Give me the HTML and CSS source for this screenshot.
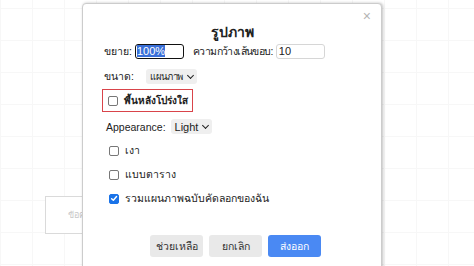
FILE: index.html
```html
<!DOCTYPE html>
<html lang="th">
<head>
    <meta charset="UTF-8">
    <title>รูปภาพ</title>
    <link rel="stylesheet" href="styles.css">
</head>
<body>

    <!-- Canvas behind the dialog -->
    <div class="canvas">
        <div class="shape">ข้อความ</div>
    </div>

    <!-- Export dialog -->
    <div class="dialog">
        <span class="close">&#215;</span>
        <div class="title">รูปภาพ</div>

        <div class="row row-first">
            <span>ขยาย:</span>
            <span class="field focused"><span class="sel">100%</span></span>
            <span class="gap-label">ความกว้างเส้นขอบ:</span>
            <span class="field">10</span>
        </div>

        <div class="row">
            <span>ขนาด:</span>
            <span class="select size-select">แผนภาพ <span class="caret"></span></span>
        </div>

        <div class="row highlight">
            <span class="check"></span>
            <span class="bold-label">พื้นหลังโปร่งใส</span>
        </div>

        <div class="row after-highlight">
            <span class="app-label">Appearance:</span>
            <span class="select">Light <span class="caret"></span></span>
        </div>

        <div class="row check-row">
            <span class="check"></span>
            <span>เงา</span>
        </div>

        <div class="row check-row">
            <span class="check"></span>
            <span>แบบตาราง</span>
        </div>

        <div class="row check-row">
            <span class="check checked">
                <svg width="9" height="9" viewBox="0 0 10 10"><path d="M2 5.2 L4.2 7.3 L8.2 2.6" fill="none" stroke="#fff" stroke-width="1.8" stroke-linecap="round" stroke-linejoin="round"/></svg>
            </span>
            <span>รวมแผนภาพฉบับคัดลอกของฉัน</span>
        </div>

        <div class="buttons">
            <button class="btn">ช่วยเหลือ</button>
            <button class="btn">ยกเลิก</button>
            <button class="btn primary">ส่งออก</button>
        </div>
    </div>

</body>
</html>
```

FILE: styles.css
```css
body {
    font-family: "Liberation Sans", "Noto Sans", sans-serif;
    font-size: 10.5px;
    color: #222;
    margin: 0;
    padding: 0;
    width: 474px;
    height: 266px;
    overflow: hidden;
    background-color: #fff;
}

.canvas {
    position: relative;
    width: 474px;
    height: 266px;
    background-image:
        linear-gradient(to right, #f7f7f7 1px, transparent 1px),
        linear-gradient(to bottom, #f7f7f7 1px, transparent 1px);
    background-size: 32px 32px;
    background-position: 0 8px;
}

.shape {
    position: absolute;
    left: 45px;
    top: 196px;
    width: 80px;
    height: 36px;
    border: 1px solid #dadada;
    color: #c8c8c8;
    font-size: 9px;
    line-height: 36px;
    text-indent: 22px;
    background: #fff;
}

.dialog {
    position: absolute;
    left: 82px;
    top: 3px;
    width: 300px;
    height: 280px;
    box-sizing: border-box;
    background: #fff;
    border: 1px solid #cccccc;
    border-radius: 4px;
    box-shadow: 1px 0 3px rgba(0, 0, 0, 0.25);
    padding: 19px 20px 0 21px;
}

.close {
    position: absolute;
    right: 10px;
    top: 4px;
    color: #b5b5b5;
    font-size: 14px;
}

.title {
    text-align: center;
    font-weight: bold;
    font-size: 14px;
    line-height: 18px;
    height: 20px;
}

.row {
    display: flex;
    align-items: center;
    height: 15px;
    margin-top: 10px;
    white-space: nowrap;
}

.row-first {
    margin-top: 1px;
}

.field {
    display: inline-block;
    box-sizing: border-box;
    width: 49px;
    height: 15px;
    line-height: 13px;
    border: 1px solid #d6d6d6;
    border-radius: 3px;
    padding-left: 2px;
    margin-left: 3px;
    font-size: 11px;
}

.focused {
    border: 1.5px solid #111;
    padding-left: 1px;
}

.sel {
    background: #3a6fd8;
    color: #fff;
}

.gap-label {
    margin-left: 9px;
    letter-spacing: -0.6px;
}

.select {
    display: inline-flex;
    align-items: center;
    height: 15px;
    background: #efefef;
    border-radius: 3px;
    padding: 0 4px 0 4px;
    margin-left: 5px;
    font-size: 11px;
}

.size-select {
    margin-left: 12px;
    font-size: 9.5px;
    letter-spacing: -0.3px;
}

.caret {
    width: 4px;
    height: 4px;
    border-right: 1.6px solid #222;
    border-bottom: 1.6px solid #222;
    transform: rotate(45deg);
    margin: -2px 0 0 5px;
}

.highlight {
    height: 23px;
    margin: 5px 0 0 -2px;
    padding: 0 4px 0 5px;
    border: 1px solid #d9444a;
    box-sizing: border-box;
    align-self: flex-start;
    display: inline-flex;
}

.after-highlight {
    margin-top: 7px;
}

.check {
    display: inline-flex;
    align-items: center;
    justify-content: center;
    box-sizing: border-box;
    width: 10px;
    height: 10px;
    border: 1px solid #777;
    border-radius: 2px;
    margin-right: 6px;
}

.checked {
    background: #1a73e8;
    border-color: #1a73e8;
}

.bold-label {
    font-weight: bold;
    font-size: 10px;
}

.app-label {
    margin-left: 2px;
}

.check-row {
    margin-top: 9px;
    padding-left: 5px;
}

.buttons {
    display: flex;
    justify-content: center;
    gap: 6px;
    margin-top: 29px;
    padding-left: 6px;
}

.btn {
    width: 53px;
    height: 22px;
    border: none;
    border-radius: 3px;
    background-color: #e9e9e9;
    color: #333;
    font-family: inherit;
    font-size: 10.5px;
    padding: 0;
    cursor: pointer;
}

.primary {
    background-color: #4a89f3;
    color: #fff;
}
```
